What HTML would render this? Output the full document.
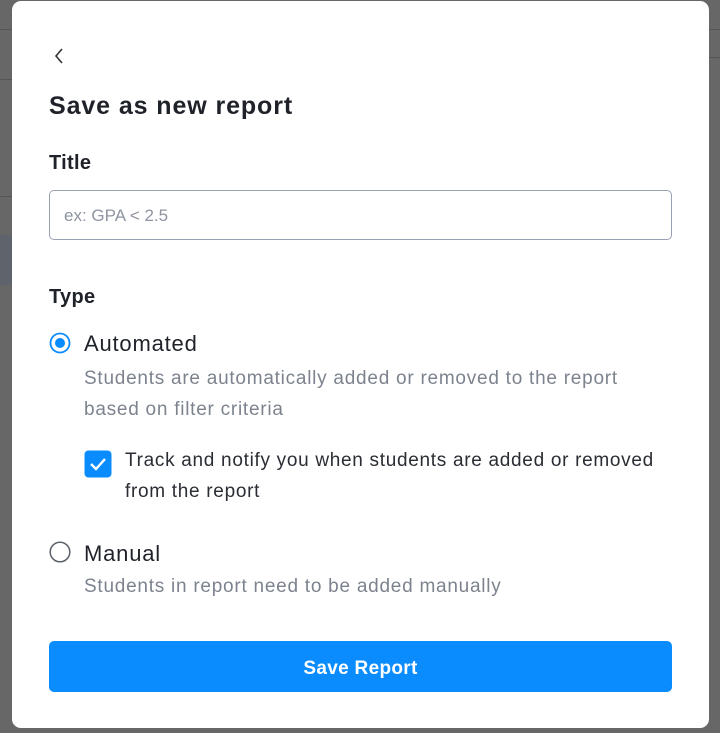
<!DOCTYPE html>
<html><head><style>
body{margin:0;width:720px;height:733px;background:#676767;position:relative;overflow:hidden;font-family:"Liberation Sans",sans-serif;}
.ln{position:absolute;background:#555;height:1px;}
.modal{position:absolute;left:12px;top:1px;width:697px;height:727px;background:#fff;border-radius:9px;}
.a{position:absolute;white-space:nowrap}
h1{position:absolute;left:37px;top:91px;margin:0;font-size:25px;font-weight:bold;color:#1f2229;letter-spacing:0.9px}
.lab{font-size:20px;font-weight:bold;color:#1f2229;letter-spacing:0.3px}
.input{left:37px;top:189px;width:623px;height:50px;border:1.5px solid #9aa1b3;border-radius:5px;box-sizing:border-box;}
.ph{position:absolute;left:14px;top:15px;font-size:17px;color:#8e94a0}
.opt{font-size:22px;color:#1f2229;letter-spacing:0.8px}
.desc{font-size:19px;color:#7d838e;line-height:31px;letter-spacing:0.75px}
.chk{font-size:19px;color:#2a2d33;line-height:31px;letter-spacing:0.7px}
.btn{left:37px;top:640px;width:623px;height:51px;background:#0a8cff;border-radius:5px;color:#fff;font-weight:bold;font-size:19px;text-align:center;line-height:55px;letter-spacing:0.3px}
</style></head><body>
<div class="ln" style="left:0;top:29px;width:12px"></div>
<div class="ln" style="left:0;top:79px;width:12px"></div>
<div class="ln" style="left:0;top:196px;width:12px"></div>
<div class="ln" style="left:709px;top:29px;width:11px"></div>
<div class="ln" style="left:709px;top:57px;width:11px"></div>
<div class="a" style="left:0;top:235px;width:12px;height:50px;background:#5f636b"></div>
<div class="modal">
<svg class="a" style="left:40px;top:46px" width="14" height="18" viewBox="0 0 14 18"><path d="M10 2 L4 9 L10 16" fill="none" stroke="#333" stroke-width="1.6"/></svg>
<h1>Save as new report</h1>
<div class="a lab" style="left:37px;top:151px">Title</div>
<div class="a input"><span class="ph">ex: GPA &lt; 2.5</span></div>
<div class="a lab" style="left:37px;top:285px">Type</div>
<svg class="a" style="left:37px;top:331px" width="22" height="22"><circle cx="11" cy="11" r="9.5" fill="#fff" stroke="#0a8cff" stroke-width="1.8"/><circle cx="11" cy="11" r="5" fill="#0a8cff"/></svg>
<div class="a opt" style="left:72px;top:330px">Automated</div>
<div class="a desc" style="left:72px;top:362px">Students are automatically added or removed to the report<br>based on filter criteria</div>
<svg class="a" style="left:72px;top:449px" width="28" height="28"><rect x="0.5" y="0.5" width="27" height="27" rx="4" fill="#0a8cff"/><path d="M7 14 L12 19 L21 9" fill="none" stroke="#fff" stroke-width="2.4"/></svg>
<div class="a chk" style="left:113px;top:444px">Track and notify you when students are added or removed<br>from the report</div>
<svg class="a" style="left:37px;top:540px" width="22" height="22"><circle cx="11" cy="11" r="9.8" fill="#fff" stroke="#5a5f68" stroke-width="1.5"/></svg>
<div class="a opt" style="left:72px;top:540px">Manual</div>
<div class="a desc" style="left:72px;top:570px">Students in report need to be added manually</div>
<div class="a btn">Save Report</div>
</div>
</body></html>
